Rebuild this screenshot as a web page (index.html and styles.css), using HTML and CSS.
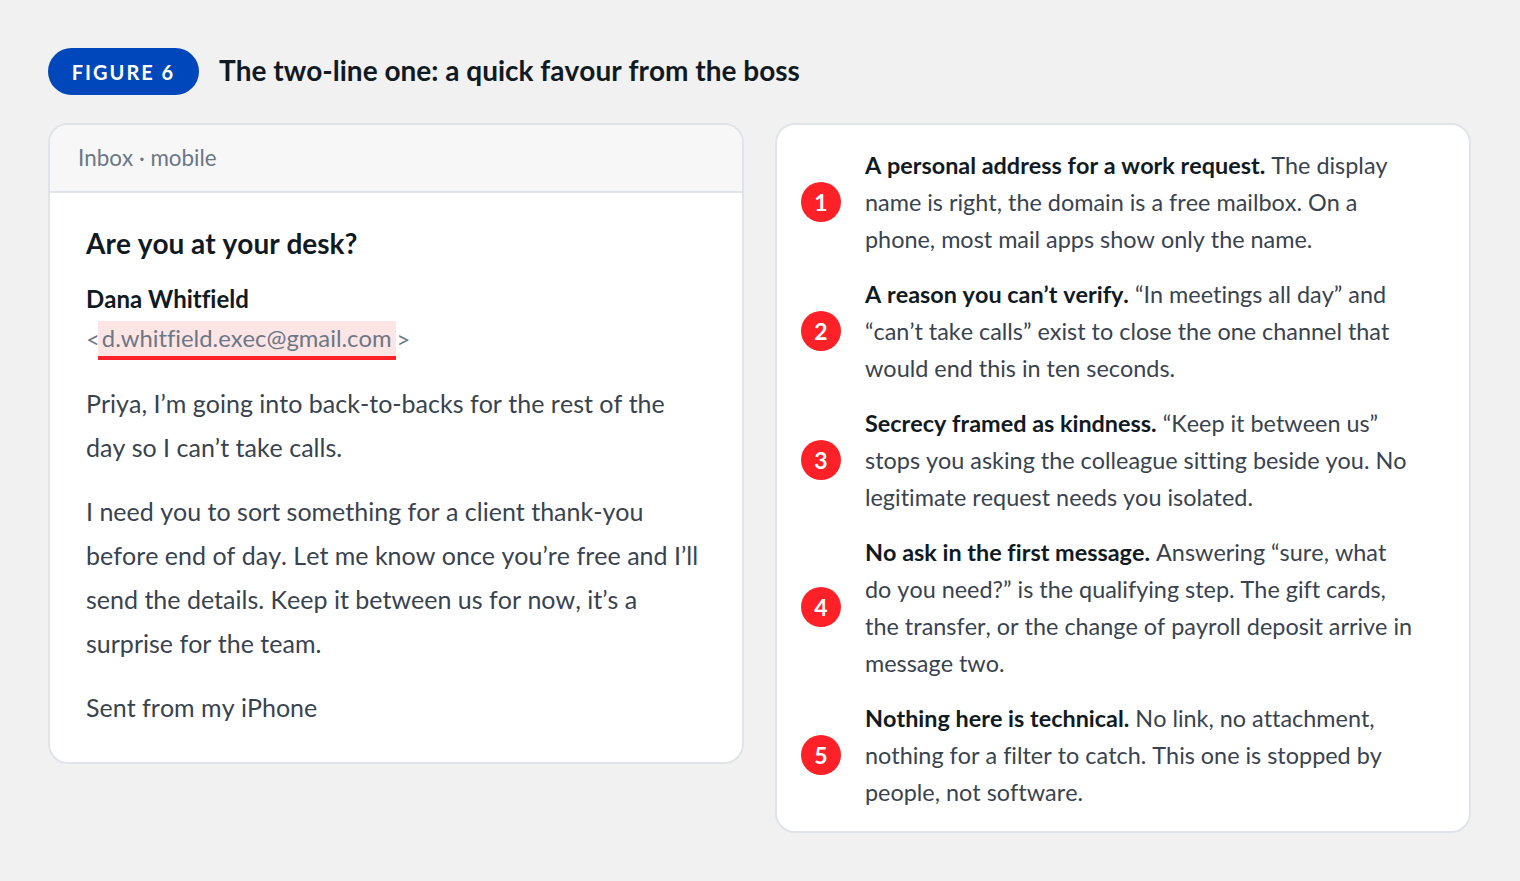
FILE: index.html
```html
<!DOCTYPE html>
<html lang="en">
<head>
<meta charset="utf-8">
<title>Figure 6</title>
<link rel="stylesheet" href="styles.css">
</head>
<body>
<main class="page">
  <header class="head">
    <span class="pill">FIGURE 6</span>
    <h1 class="title">The two-line one: a quick favour from the boss</h1>
  </header>
  <div class="cols">
    <section class="card mail">
      <div class="mail-bar">Inbox · mobile</div>
      <div class="mail-body">
        <h2 class="subject">Are you at your desk?</h2>
        <div class="sender">Dana Whitfield</div>
        <div class="address"><span class="bracket">&lt;</span><span class="flag">d.whitfield.exec@gmail.com</span><span class="bracket">&gt;</span></div>
        <p class="para">Priya, I’m going into back-to-backs for the rest of the day so I can’t take calls.</p>
        <p class="para">I need you to sort something for a client thank-you before end of day. Let me know once you’re free and I’ll send the details. Keep it between us for now, it’s a surprise for the team.</p>
        <p class="para">Sent from my iPhone</p>
      </div>
    </section>
    <section class="card notes">
      <div class="note"><span class="num">1</span><p class="note-text"><b>A personal address for a work request.</b> The display name is right, the domain is a free mailbox. On a phone, most mail apps show only the name.</p></div>
      <div class="note"><span class="num">2</span><p class="note-text"><b>A reason you can’t verify.</b> “In meetings all day” and “can’t take calls” exist to close the one channel that would end this in ten seconds.</p></div>
      <div class="note"><span class="num">3</span><p class="note-text"><b>Secrecy framed as kindness.</b> “Keep it between us” stops you asking the colleague sitting beside you. No legitimate request needs you isolated.</p></div>
      <div class="note"><span class="num">4</span><p class="note-text"><b>No ask in the first message.</b> Answering “sure, what do you need?” is the qualifying step. The gift cards, the transfer, or the change of payroll deposit arrive in message two.</p></div>
      <div class="note"><span class="num">5</span><p class="note-text"><b>Nothing here is technical.</b> No link, no attachment, nothing for a filter to catch. This one is stopped by people, not software.</p></div>
    </section>
  </div>
</main>
</body>
</html>
```

FILE: styles.css
```css
* { box-sizing: border-box; }
html, body { margin: 0; height: 100%; }
body {
  background: #f1f1f1;
  font-family: Lato, "Open Sans", sans-serif;
  color: #111a22;
  overflow: hidden;
  text-rendering: optimizeSpeed;
  font-variant-ligatures: none;
  font-kerning: none;
}
.page { width: 1423px; margin: 48px 0 0 48px; }
.head { display: flex; align-items: center; gap: 20px; margin-bottom: 28px; }
.pill {
  display: inline-flex; align-items: center; justify-content: center;
  height: 47px; width: 151px; border-radius: 24px;
  background: #0047bb; color: #fff;
  font-size: 20px; font-weight: 700; letter-spacing: 2px;
}
.title { margin: 0 0 4px; font-size: 28px; font-weight: 700; line-height: 42px; color: #111a22; }
.cols { display: grid; grid-template-columns: 1fr 1fr; gap: 31px; align-items: start; }
.card {
  background: #fff; border: 2px solid #e0e4e9; border-radius: 20px; overflow: hidden;
}
.mail-bar {
  height: 68px; padding: 0 28px 2px; display: flex; align-items: center;
  background: #f7f7f7; border-bottom: 2px solid #e0e4e9;
  color: #6b7785; font-size: 22.4px;
}
.mail-body { padding: 30px 36px 33px; }
.subject { margin: 0 0 18px; font-size: 28px; font-weight: 700; line-height: 40px; }
.sender { font-size: 24px; font-weight: 700; line-height: 36px; margin-top: 2px; }
.address { display: flex; align-items: center; color: #6b7785; font-size: 23.8px; line-height: 34px; height: 36px; margin: 5px 0 23px; }
.bracket { margin-bottom: 2px; }
.flag {
  background: #fde5e5; border-bottom: 4px solid #ff2128; padding: 0 4px; margin: 0 -1px 0 -2px; height: 39px; flex: none;
}
.flag + .bracket { margin-left: 2px; }
.para { margin: 0 0 20px; font-size: 25px; line-height: 44px; color: #39434f; }
.para:last-child { margin-bottom: 0; }
.notes { padding: 22px 24px 20px 24px; display: flex; flex-direction: column; gap: 18px; }
.note { display: flex; align-items: center; gap: 24px; }
.num {
  flex: none; width: 40px; height: 40px; border-radius: 50%; margin-bottom: 2px;
  background: #ff2128; color: #fff; font-size: 23px; font-weight: 700;
  display: flex; align-items: center; justify-content: center;
}
.note-text { margin: 0; font-size: 23.4px; line-height: 37px; color: #39434f; max-width: 550px; }
.note-text b { color: #111a22; }
```
